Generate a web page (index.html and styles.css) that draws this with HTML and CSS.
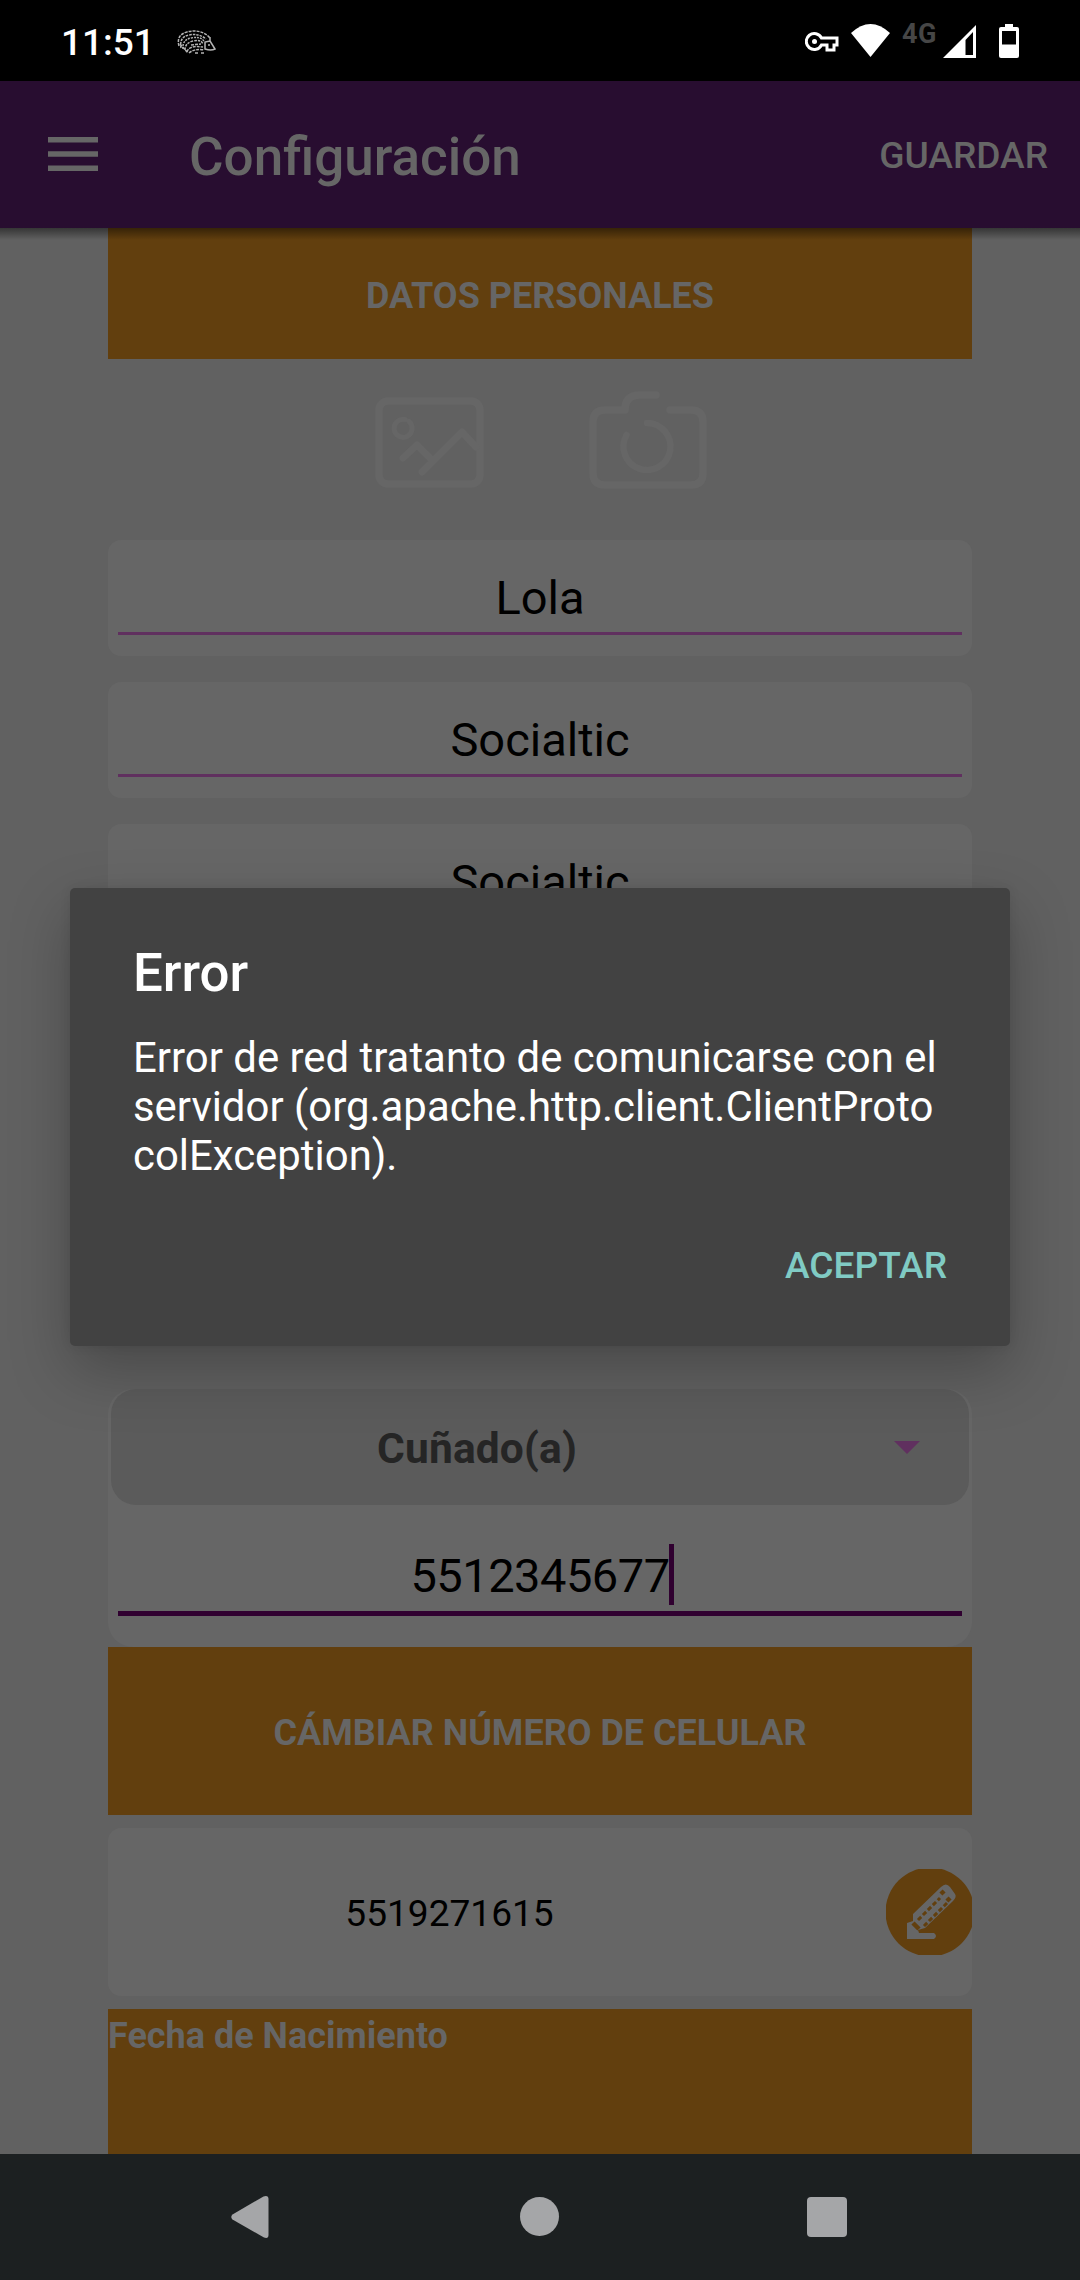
FILE: index.html
```html
<!DOCTYPE html>
<html lang="es">
<head>
<meta charset="utf-8">
<title>Configuración</title>
<link rel="stylesheet" href="styles.css">
</head>
<body>
<div class="screen">
  <header class="status">
    <span class="clock">11:51</span>
    <svg class="hedgehog" width="40" height="26" viewBox="0 0 40 26" fill="none" stroke="#b4b4b4" stroke-width="1.5">
      <path d="M2 17Q-1 6 10 3T30 6L33 9" stroke-dasharray="3 1"/>
      <path d="M4 19Q2 8 12 6T29 10" stroke-dasharray="2.5 1"/>
      <path d="M6 20Q5 11 14 9T27 12" stroke-dasharray="2 1"/>
      <path d="M8 21Q8 14 16 12T26 15" stroke-dasharray="2.5 1"/>
      <path d="M3 15L11 24M10 23Q12 16 26 18M12 24Q18 19 27 21M14 16L24 15M18 24H21M24 24H28" stroke-dasharray="3 1"/>
      <path d="M33 8V12L38 20Q34 22 28 20V13L33 12"/>
      <circle cx="32" cy="16" r="1" fill="#b4b4b4" stroke="none"/>
    </svg>
    <div class="indicators">
      <svg class="key" width="34" height="22" viewBox="0 0 34 22" fill="none" stroke="#fff" stroke-width="3">
        <path d="M16.5 7H32V14H29V19H22V14H16.5A8 8 0 1 1 16.5 7Z"/>
        <circle cx="9.5" cy="10.500" r="2.500" fill="#fff" stroke="none"/>
      </svg>
      <svg class="wifi" width="39" height="33" viewBox="0 0 39 33" fill="#fff"><path d="M0 9Q19.500 -9 39 9L19.500 33Z"/></svg>
      <span class="net">4G</span>
      <svg class="signal" width="33" height="33" viewBox="0 0 33 33"><path fill="#fff" fill-rule="evenodd" d="M33 0V33H0ZM30 7L22.500 15V30H30Z"/></svg>
      <svg class="battery" width="20" height="34" viewBox="0 0 20 34"><path fill="#fff" fill-rule="evenodd" d="M6 0H14V3H18Q20 3 20 5V32Q20 34 18 34H2Q0 34 0 32V5Q0 3 2 3H6ZM3 7V20.500H17V7Z"/></svg>
    </div>
  </header>

  <nav class="toolbar">
    <svg class="menu" width="50" height="34" viewBox="0 0 50 34" fill="#666"><path d="M0 0H50V5.500H0ZM0 14.200H50V19.700H0ZM0 28.400H50V33.900H0Z"/></svg>
    <h1 class="title">Configuración</h1>
    <span class="save">GUARDAR</span>
  </nav>

  <main class="form">
    <div class="banner personal"><span>DATOS PERSONALES</span></div>
    <div class="photo">
      <svg width="110" height="92" viewBox="0 0 110 92" fill="none" stroke="#666" stroke-width="7.500" stroke-linecap="round" stroke-linejoin="round">
        <rect x="4" y="4" width="101" height="83" rx="9"/>
        <path d="M34 24.500A9 9 0 1 1 30 22.500" stroke-width="5"/>
        <path d="M28 61L42 48L57 63M47 75L87 35L101 50" stroke-width="7"/>
      </svg>
      <svg width="120" height="100" viewBox="0 0 120 100" fill="none" stroke="#666" stroke-width="7.500" stroke-linecap="round" stroke-linejoin="round">
        <path d="M82 20H103Q115 20 115 32V83Q115 95 103 95H17Q5 95 5 83V32Q5 20 17 20H37Q37 5 52 5H68"/>
        <path d="M59 33A23.500 23.500 0 1 1 38.500 45" stroke-width="6.500"/>
      </svg>
    </div>
    <div class="field"><span>Lola</span></div>
    <div class="field"><span>Socialtic</span></div>
    <div class="field"><span>Socialtic</span></div>
    <section class="contact">
      <div class="spinner">
        <span class="relation">Cuñado(a)</span>
        <svg width="26" height="13" viewBox="0 0 26 13"><path fill="#60305f" d="M0 0H26L13 13Z"/></svg>
      </div>
      <div class="phone"><span>5512345677</span><i class="caret"></i></div>
    </section>
    <div class="banner change"><span>CÁMBIAR NÚMERO DE CELULAR</span></div>
    <div class="mobile">
      <span>5519271615</span>
      <svg width="86" height="86" viewBox="0 0 86 86">
        <circle cx="44" cy="43" r="44.500" fill="#623f0e"/>
        <path fill="#666" d="M21 70V54L27 52V45L55 18Q60 13 64 18L69 25Q71 28 67 32L39 59L32 61L33 64H48Q52 67 48 70Z"/>
        <path d="M32 51L54 29M38 57L61 34" stroke="#623f0e" stroke-width="3" stroke-dasharray="4.500 2.500" fill="none"/>
        <path d="M55 22L58 25M61 29L64 32M27 54L33 60" stroke="#623f0e" stroke-width="4.500"/>
      </svg>
    </div>
    <div class="birth">Fecha de Nacimiento</div>
  </main>

  <footer class="navbar">
    <svg width="38" height="42" viewBox="0 0 38 42" fill="#a5a6a8"><path d="M1.500 18.500L32.500 .5Q37.500 -1 37.500 3V39Q37.500 43 33 41.500L1.500 23.500Q-1 21 1.500 18.500Z"/></svg>
    <svg width="40" height="40" viewBox="0 0 40 40" fill="#a5a6a8"><circle cx="19.500" cy="19.500" r="19.500"/></svg>
    <svg width="40" height="40" viewBox="0 0 40 40" fill="#a5a6a8"><rect width="40" height="40" rx="4"/></svg>
  </footer>

  <div class="dialog" role="alertdialog">
    <h2 class="heading">Error</h2>
    <p class="message">Error de red tratanto de comunicarse con el servidor (org.apache.http.client.ClientProto<wbr>colException).</p>
    <span class="accept">ACEPTAR</span>
  </div>
</div>
</body>
</html>
```
FILE: styles.css
```css
* { box-sizing: border-box; }
body { margin: 0; font-family: Roboto, sans-serif; }
svg { display: block; flex: none; }
h1, h2, p { margin: 0; }

.screen {
  position: relative;
  display: flex;
  flex-direction: column;
  width: 1080px;
  height: 2280px;
  overflow: hidden;
  background: #616161;
}

.status {
  display: flex;
  align-items: center;
  flex: none;
  height: 81px;
  padding: 2px 61px 0 61px;
  background: #000;
}
.clock { width: 116px; padding-top: 1px; color: #fff; font-size: 37px; font-weight: 500; }
.indicators { display: flex; margin-left: auto; height: 35px; }
.key { margin: 7px 12px 0 0; }
.net { width: 41px; margin-left: 12px; color: #464646; font-size: 27px; font-weight: 700; line-height: 21px; letter-spacing: 0.5px; }
.signal { margin: 1px 23px 0 0; }

.toolbar {
  position: relative;
  z-index: 1;
  display: flex;
  align-items: center;
  flex: none;
  height: 147px;
  padding: 0 32px 0 48px;
  background: #280d30;
  color: #666;
}
.toolbar::after {
  content: "";
  position: absolute;
  left: 0;
  right: 0;
  top: 100%;
  height: 12px;
  background: linear-gradient(rgba(0, 0, 0, .45), rgba(0, 0, 0, 0));
}
.menu { margin-bottom: 1px; }
.title { margin-left: 91px; padding-top: 5px; font-size: 53px; font-weight: 500; }
.save { margin-left: auto; padding-top: 1px; font-size: 37.1px; font-weight: 500; }

.form { display: flex; flex-direction: column; flex: 1; min-height: 0; padding: 0 108px; overflow: hidden; }
.banner {
  display: flex;
  align-items: center;
  justify-content: center;
  flex: none;
  background: #623f0e;
  color: #666;
  font-size: 36px;
  font-weight: 700;
}
.personal { height: 131px; padding-top: 5px; }
.change { height: 168px; padding-top: 3px; }
.photo { display: flex; flex: none; gap: 103px; height: 181px; padding: 38px 0 0 267px; }
.photo svg:last-child { margin-top: -7px; }

.field {
  display: flex;
  align-items: center;
  justify-content: center;
  flex: none;
  position: relative;
  height: 116px;
  margin-bottom: 26px;
  padding-bottom: 2px;
  border-radius: 13px;
  background: #666;
  color: #000;
  font-size: 47px;
}
.field::after, .phone::after {
  content: "";
  position: absolute;
  left: 10px;
  right: 10px;
  bottom: 21px;
  height: 2.7px;
  background: #60305f;
}

.contact { flex: none; height: 258px; margin-top: 423px; border-radius: 25px; background: #666; }
.spinner {
  display: flex;
  align-items: center;
  height: 116px;
  margin: 0 3px;
  padding-right: 49px;
  border-radius: 25px;
  background: #5b5b5b;
}
.relation { flex: 1; padding: 3px 51px 0 0; color: #252525; font-size: 42.5px; font-weight: 700; letter-spacing: 0.15px; text-align: center; }
.phone {
  position: relative;
  display: flex;
  align-items: center;
  justify-content: center;
  height: 142px;
  padding-bottom: 2px;
  font-size: 47px;
  letter-spacing: -0.5px;
}
.phone::after { bottom: 31px; height: 5.5px; background: #300030; }
.caret { position: absolute; left: 561px; top: 39px; width: 5px; height: 61px; background: #300030; }

.mobile {
  display: flex;
  align-items: center;
  flex: none;
  height: 168px;
  margin: 13px 0;
  border-radius: 13px;
  background: #666;
  font-size: 37.1px;
}
.mobile span { width: 683px; margin-right: 95px; padding-top: 2px; text-align: center; }
.birth { flex: none; height: 145px; padding-top: 5px; background: #623f0e; color: #666; font-size: 36px; font-weight: 700; line-height: 45px; }

.navbar {
  display: flex;
  align-items: center;
  flex: none;
  gap: 251px;
  height: 126px;
  padding: 0 0 0 231px;
  background: #1c2021;
}
.navbar svg:last-child { margin-left: -4px; }

.dialog {
  position: absolute;
  z-index: 2;
  left: 70px;
  top: 888px;
  width: 940px;
  height: 458px;
  padding: 53px 63px 0 63px;
  border-radius: 5px;
  background: #424242;
  color: #fff;
  box-shadow: 0 24px 60px rgba(0, 0, 0, .25), 0 0 12px rgba(0, 0, 0, .08);
}
.heading { height: 92px; font-size: 52.8px; font-weight: 500; line-height: 64px; }
.message { height: 208px; font-size: 41.9px; line-height: 49px; }
.accept { display: block; color: #80cbc4; font-size: 37.1px; font-weight: 500; line-height: 50px; text-align: right; }
```
